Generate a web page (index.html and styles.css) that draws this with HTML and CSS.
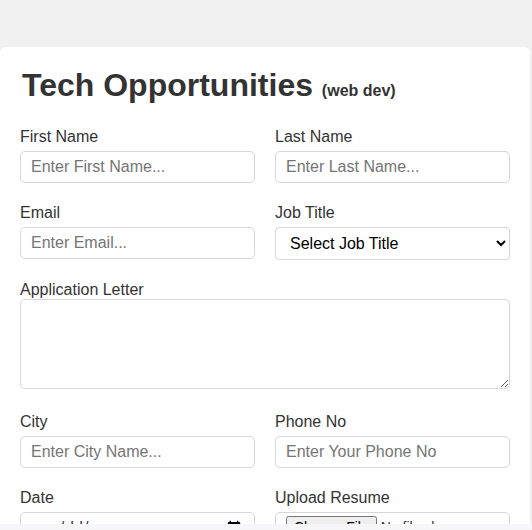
FILE: index.html
```html
<!DOCTYPE html>
<html lang="en">
<head>
<meta charset="utf-8">
<title>Tech Opportunities</title>
<link rel="stylesheet" href="styles.css">
</head>
<body>
<main class="card">
  <h1 class="title">Tech Opportunities <small class="sub">(web dev)</small></h1>
  <form class="form">
    <div class="field">
      <label class="label" for="fn">First Name</label>
      <input class="input" id="fn" type="text" placeholder="Enter First Name...">
    </div>
    <div class="field">
      <label class="label" for="ln">Last Name</label>
      <input class="input" id="ln" type="text" placeholder="Enter Last Name...">
    </div>
    <div class="field">
      <label class="label" for="em">Email</label>
      <input class="input" id="em" type="email" placeholder="Enter Email...">
    </div>
    <div class="field">
      <label class="label" for="jt">Job Title</label>
      <select class="select" id="jt">
        <option>Select Job Title</option>
      </select>
    </div>
    <div class="field wide">
      <label class="label tight" for="al">Application Letter</label>
      <textarea class="textarea" id="al"></textarea>
    </div>
    <div class="field">
      <label class="label" for="ct">City</label>
      <input class="input" id="ct" type="text" placeholder="Enter City Name...">
    </div>
    <div class="field">
      <label class="label" for="ph">Phone No</label>
      <input class="input" id="ph" type="text" placeholder="Enter Your Phone No">
    </div>
    <div class="field">
      <label class="label" for="dt">Date</label>
      <input class="input" id="dt" type="date">
    </div>
    <div class="field">
      <label class="label" for="rs">Upload Resume</label>
      <input class="input file" id="rs" type="file">
    </div>
  </form>
</main>
<div class="bottom-strip"></div>
</body>
</html>
```

FILE: styles.css
```css
html, body {
  margin: 0;
  padding: 0;
}
body {
  background: #f1f1f1;
  font-family: "Liberation Sans", Arial, sans-serif;
  color: #333;
  padding-top: 47px;
  overflow: hidden;
  height: 530px;
  box-sizing: border-box;
}
.card {
  width: 530px;
  height: 483px;
  overflow: hidden;
  box-sizing: border-box;
  background: #fff;
  border-radius: 6px 6px 0 0;
  padding: 20px 20px 0 20px;
}
.title {
  margin: 0 0 19px 2px;
  font-size: 32px;
  font-weight: bold;
  color: #333;
  line-height: 37px;
}
.sub {
  font-size: 16px;
  font-weight: bold;
}
.form {
  display: grid;
  grid-template-columns: minmax(0, 1fr) minmax(0, 1fr);
  column-gap: 20px;
  row-gap: 21px;
}
.field {
  display: flex;
  flex-direction: column;
  min-width: 0;
}
.wide {
  grid-column: 1 / span 2;
  padding-bottom: 3px;
}
.label {
  font-size: 16px;
  line-height: 18px;
  margin-bottom: 5px;
  color: #333;
}
.label.tight {
  margin-bottom: 0;
}
.input {
  width: 100%;
  min-width: 0;
  height: 32px;
  box-sizing: border-box;
  border: 1px solid #d6d6d6;
  border-radius: 5px;
  padding: 0 10px;
  font-family: "Liberation Sans", Arial, sans-serif;
  font-size: 16px;
  color: #333;
  background: #fff;
  margin: 0;
}
.input::placeholder {
  color: #757575;
}
.file {
  padding: 3px 10px;
  font-size: 14px;
}
.select {
  width: 100%;
  min-width: 0;
  height: 33px;
  box-sizing: border-box;
  border: 1px solid #d6d6d6;
  border-radius: 4px;
  padding: 0 10px;
  font-family: "Liberation Sans", Arial, sans-serif;
  font-size: 16px;
  color: #000;
  background: #fff;
  margin: 0;
}
.textarea {
  width: 100%;
  height: 90px;
  box-sizing: border-box;
  border: 1px solid #d6d6d6;
  border-radius: 5px;
  margin: 0;
  resize: vertical;
}
.bottom-strip {
  position: fixed;
  left: 0;
  right: 0;
  bottom: 0;
  height: 6px;
  background: #f7f7fa;
}
```
